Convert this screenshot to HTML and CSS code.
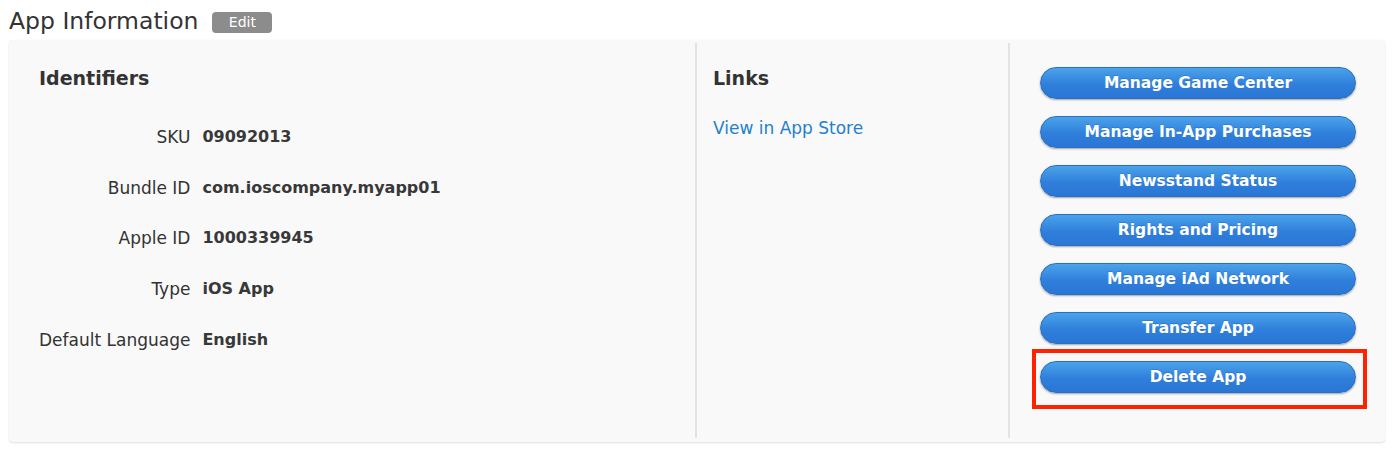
FILE: index.html
```html
<!DOCTYPE html>
<html>
<head>
<meta charset="utf-8">
<link rel="stylesheet" href="styles.css">
</head>
<body>
<div class="title-row">
  <h1 class="title">App Information</h1>
  <span class="edit">Edit</span>
</div>
<div class="panel">
  <div class="col col-ids">
    <h2 class="heading">Identifiers</h2>
    <dl class="fields">
      <dt>SKU</dt><dd>09092013</dd>
      <dt>Bundle ID</dt><dd>com.ioscompany.myapp01</dd>
      <dt>Apple ID</dt><dd>1000339945</dd>
      <dt>Type</dt><dd>iOS App</dd>
      <dt>Default Language</dt><dd>English</dd>
    </dl>
  </div>
  <div class="col col-links">
    <h2 class="heading">Links</h2>
    <a class="link" href="#">View in App Store</a>
  </div>
  <div class="col col-actions">
    <button class="btn">Manage Game Center</button>
    <button class="btn">Manage In-App Purchases</button>
    <button class="btn">Newsstand Status</button>
    <button class="btn">Rights and Pricing</button>
    <button class="btn">Manage iAd Network</button>
    <button class="btn">Transfer App</button>
    <div class="highlight"><button class="btn">Delete App</button></div>
  </div>
</div>
</body>
</html>
```
FILE: styles.css
```css
html, body {
  margin: 0;
  padding: 0;
  background: #ffffff;
}
body {
  font-family: "DejaVu Sans", "Liberation Sans", sans-serif;
  color: #333333;
  width: 1397px;
  height: 455px;
  overflow: hidden;
}
.title-row {
  display: flex;
  align-items: center;
  gap: 14px;
  padding: 6px 0 0 9px;
  height: 30px;
}
.title {
  margin: 0;
  font-size: 23.5px;
  font-weight: normal;
  color: #333;
  line-height: 28px;
}
.edit {
  background: #8c8c8c;
  color: #fff;
  font-size: 14px;
  font-weight: normal;
  border-radius: 4px;
  width: 60px;
  height: 21px;
  line-height: 21px;
  text-align: center;
  margin-top: 2px;
}
.panel {
  margin: 4px 0 0 9px;
  width: 1376px;
  height: 402px;
  box-sizing: border-box;
  background: #f9f9f9;
  border-radius: 4px;
  box-shadow: 0 1px 2px rgba(0,0,0,0.12), 0 0 1px rgba(0,0,0,0.08);
  display: grid;
  grid-template-columns: 686px 313px 1fr;
  padding: 3px 0 4px;
}
.col {
  box-sizing: border-box;
}
.col-links, .col-actions {
  border-left: 2px solid #e3e3e3;
}
.col-ids {
  padding: 21px 0 0 30px;
}
.col-links {
  padding: 21px 0 0 16px;
}
.heading {
  margin: 0;
  font-size: 19px;
  font-weight: bold;
  color: #333;
  line-height: 28px;
}
.fields {
  margin: 20px 0 0 0;
  display: grid;
  grid-template-columns: max-content auto;
  column-gap: 12px;
  row-gap: 0;
  font-size: 16px;
  line-height: 50.7px;
}
.fields dt {
  text-align: right;
  color: #333;
  font-size: 17px;
  white-space: nowrap;
}
.fields dd {
  margin: 0;
  font-weight: bold;
  color: #383838;
  white-space: nowrap;
}
.link {
  display: block;
  margin-top: 25px;
  font-size: 17px;
  color: #1f80cf;
  text-decoration: none;
  line-height: 22px;
}
.col-actions {
  padding: 24px 0 0 30px;
  display: flex;
  flex-direction: column;
  gap: 17px;
  align-items: flex-start;
}
.btn {
  width: 316px;
  height: 32px;
  border-radius: 16px;
  border: 1px solid #2a6fc2;
  background: linear-gradient(#4ba3ea, #2f7fdb 55%, #2a76d6);
  color: #fff;
  font-family: "DejaVu Sans", "Liberation Sans", sans-serif;
  font-size: 15.5px;
  font-weight: bold;
  text-shadow: 0 -1px 0 rgba(0,0,0,0.15);
  box-shadow: 0 1px 2px rgba(0,0,0,0.35);
  padding: 0;
  display: block;
}
.highlight {
  position: relative;
}
.highlight::after {
  content: "";
  position: absolute;
  left: -8px;
  top: -12px;
  right: -11px;
  bottom: -16px;
  border: 4px solid #ff2200;
  pointer-events: none;
}
```
